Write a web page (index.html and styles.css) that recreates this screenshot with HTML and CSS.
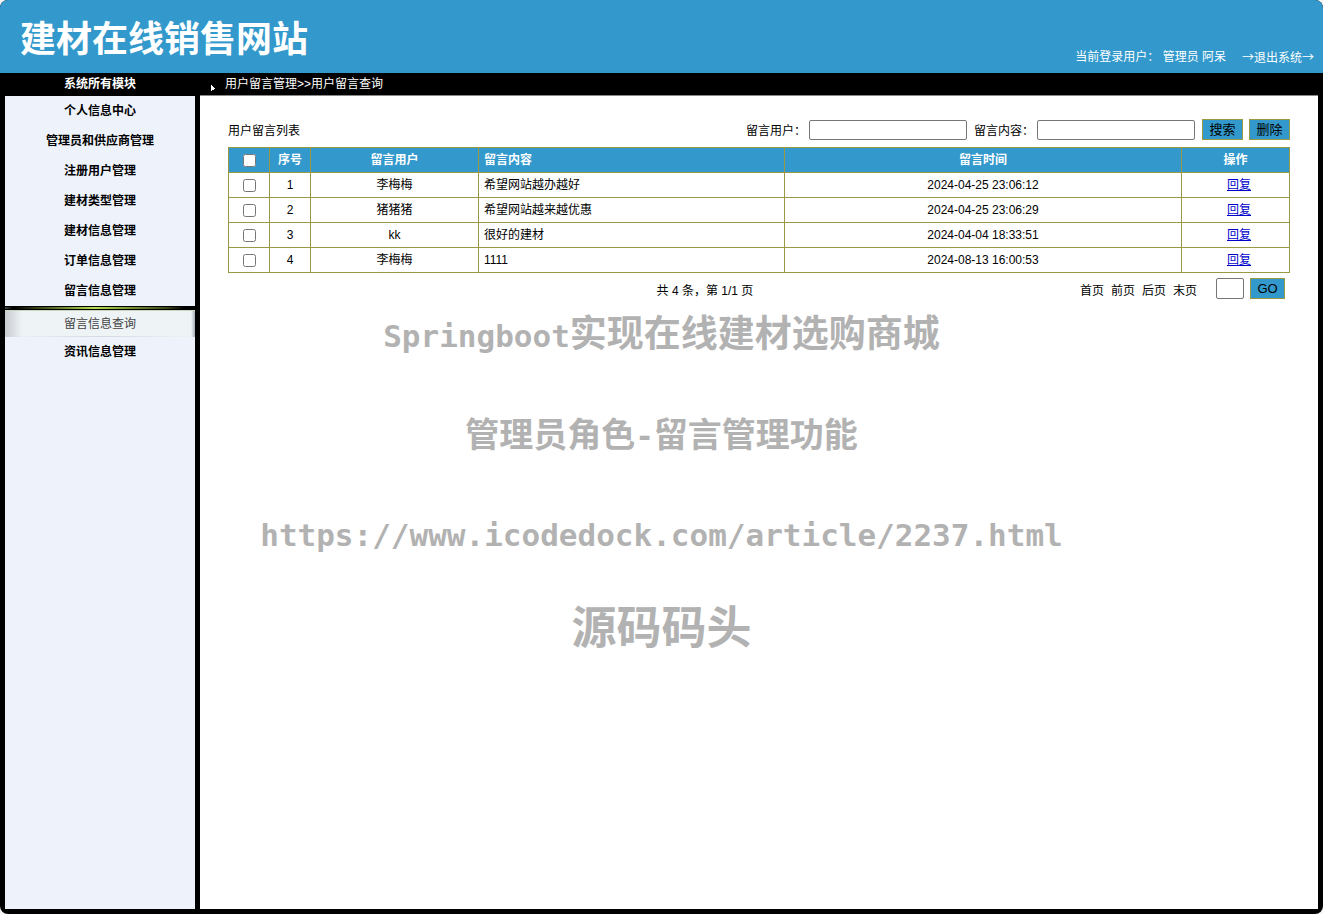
FILE: index.html
```html
<!DOCTYPE html>
<html lang="zh-CN">
<head>
<meta charset="utf-8">
<title>建材在线销售网站</title>
<link rel="stylesheet" href="styles.css">
</head>
<body>
<div class="app">
  <header class="header">
    <h1 class="site-title">建材在线销售网站</h1>
    <div class="user-bar">
      <span>当前登录用户： 管理员 阿呆</span>
      <a class="logout" href="#">→退出系统→</a>
    </div>
  </header>
  <div class="columns">
    <aside class="side">
      <h2 class="side-title">系统所有模块</h2>
      <nav class="menu">
        <a class="item" href="#">个人信息中心</a>
        <a class="item" href="#">管理员和供应商管理</a>
        <a class="item" href="#">注册用户管理</a>
        <a class="item" href="#">建材类型管理</a>
        <a class="item" href="#">建材信息管理</a>
        <a class="item" href="#">订单信息管理</a>
        <a class="item" href="#">留言信息管理</a>
        <a class="subitem" href="#">留言信息查询</a>
        <a class="item" href="#">资讯信息管理</a>
      </nav>
    </aside>
    <main class="main">
      <div class="crumbs">
        <svg class="crumb-arrow" viewBox="0 0 4 6" aria-hidden="true"><path d="M0 0h1v1h1v1h1v1h1v1H3v1H1v1H0z"/></svg>
        <span>用户留言管理&gt;&gt;用户留言查询</span>
      </div>
      <div class="content">
        <form class="toolbar">
          <span class="list-title">用户留言列表</span>
          <label class="field-label" for="user">留言用户：</label>
          <input class="box field" id="user" type="text">
          <label class="field-label" for="text">留言内容：</label>
          <input class="box field" id="text" type="text">
          <button class="btn" type="button">搜索</button>
          <button class="btn btn-last" type="button">删除</button>
        </form>
        <table class="list">
          <colgroup><col class="c-check"><col class="c-num"><col class="c-user"><col class="c-text"><col><col class="c-action"></colgroup>
          <thead>
            <tr><th><input class="check" type="checkbox" aria-label="全选"></th><th>序号</th><th>留言用户</th><th class="left">留言内容</th><th>留言时间</th><th>操作</th></tr>
          </thead>
          <tbody>
            <tr><td><input class="check" type="checkbox" aria-label="选择 1"></td><td>1</td><td>李梅梅</td><td class="left">希望网站越办越好</td><td>2024-04-25 23:06:12</td><td class="action"><a href="#">回复</a></td></tr>
            <tr><td><input class="check" type="checkbox" aria-label="选择 2"></td><td>2</td><td>猪猪猪</td><td class="left">希望网站越来越优惠</td><td>2024-04-25 23:06:29</td><td class="action"><a href="#">回复</a></td></tr>
            <tr><td><input class="check" type="checkbox" aria-label="选择 3"></td><td>3</td><td>kk</td><td class="left">很好的建材</td><td>2024-04-04 18:33:51</td><td class="action"><a href="#">回复</a></td></tr>
            <tr><td><input class="check" type="checkbox" aria-label="选择 4"></td><td>4</td><td>李梅梅</td><td class="left">1111</td><td>2024-08-13 16:00:53</td><td class="action"><a href="#">回复</a></td></tr>
          </tbody>
        </table>
        <form class="pager">
          <span class="summary">共 4 条，第 1/1 页</span>
          <span class="pages"><a href="#">首页</a><a href="#">前页</a><a href="#">后页</a><a href="#">末页</a></span>
          <input class="box page-no" type="text" aria-label="页码">
          <button class="btn go" type="button">GO</button>
        </form>
      </div>
    </main>
  </div>
  <div class="watermark">
    <p class="mark mark-a"><span class="mono">Springboot</span>实现在线建材选购商城</p>
    <p class="mark mark-b">管理员角色<span class="mono">-</span>留言管理功能</p>
    <p class="mark mark-c">https://www.icodedock.com/article/2237.html</p>
    <p class="mark mark-d">源码码头</p>
  </div>
</div>
</body>
</html>
```
FILE: styles.css
```css
* { box-sizing: border-box; }
body {
  margin: 0;
  background: #f4f4f4;
  color: #000;
  font: 12px/20px "Liberation Sans", "Noto Sans CJK SC", sans-serif;
}
a { color: inherit; text-decoration: none; }
h1, h2, p { margin: 0; }
.app {
  position: relative;
  display: flex;
  flex-direction: column;
  min-height: 100vh;
  background: #000;
  border-radius: 8px;
  overflow: hidden;
}
.header {
  display: flex;
  justify-content: space-between;
  align-items: flex-end;
  height: 73px;
  padding: 0 9px 6px 20px;
  background: #3399cc;
  color: #fff;
}
.site-title { font-size: 36px; line-height: 54px; }
.user-bar { display: flex; gap: 16px; }
.logout { font-family: "Noto Sans CJK SC", sans-serif; }
.columns { flex: 1; display: flex; gap: 5px; padding: 0 5px 5px; }
.side { width: 190px; display: flex; flex-direction: column; text-align: center; }
.side-title { height: 23px; font-size: 12px; line-height: 22px; color: #fff; }
.menu { flex: 1; background: #edf2fb; }
.item { display: block; height: 30px; line-height: 31px; font-weight: bold; }
.subitem {
  display: block;
  height: 31px;
  padding-top: 4px;
  line-height: 29px;
  color: #444;
  background:
    linear-gradient(#000, #000) 0 0 / 100% 1px no-repeat,
    linear-gradient(90deg, #444, #000 4%, #000 5%, #b4e050 47%, #3a4718 85%, #000 94%) 0 1px / 100% 2px no-repeat,
    linear-gradient(#000, #000) 0 3px / 100% 1px no-repeat,
    linear-gradient(#c8d8c0, #c8d8c0) 0 4px / 100% 1px no-repeat,
    linear-gradient(90deg, transparent, #d5dade 50%, transparent) bottom / 100% 1px no-repeat,
    linear-gradient(90deg, #c8cbcf, #eef3f6 9%, #eef3f6 98%, #a5adb5);
}
.main { flex: 1; min-width: 0; display: flex; flex-direction: column; }
.crumbs {
  display: flex;
  align-items: center;
  gap: 10px;
  height: 23px;
  padding: 0 11px 1px;
  border-bottom: 1px solid #888;
  color: #fff;
}
.crumb-arrow { width: 4px; height: 6px; margin-top: 8px; fill: #fff; }
.content { flex: 1; padding: 23px 28px; background: #fff; }
.toolbar { display: flex; align-items: center; margin-bottom: 7px; line-height: 17px; }
.list-title { flex: 1; padding-top: 4px; }
.field-label { margin-right: 3px; padding-top: 4px; }
.box {
  height: 20px;
  padding: 1px 2px;
  border: 1px solid #767676;
  border-radius: 2px;
  background: #fff;
  font: inherit;
}
.field { width: 158px; margin-right: 7px; }
.btn {
  width: 41px;
  height: 21px;
  padding: 0;
  border: 1px solid #999944;
  background: #3399cc;
  color: #000;
  font: 13px/19px "Liberation Sans", "Noto Sans CJK SC", sans-serif;
}
.btn-last { margin-left: 6px; }
.list { width: 100%; table-layout: fixed; border-collapse: collapse; }
.c-check, .c-num { width: 41px; }
.c-user { width: 168px; }
.c-text { width: 306px; }
.c-action { width: 108px; }
.list th, .list td { height: 25px; padding: 0; border: 1px solid #999944; text-align: center; }
.list th { background: #3399cc; color: #fff; }
.list .left { padding-left: 5px; text-align: left; }
.list .action { padding-left: 7px; }
.action a { color: #0000cc; text-decoration: underline; }
.check { display: block; width: 13px; height: 13px; margin: 1px auto 0; }
.pager { display: flex; align-items: flex-start; margin-top: 5px; padding-right: 5px; }
.summary { flex: 1; padding: 3px 0 0 102px; text-align: center; }
.pages { display: flex; gap: 7px; padding-top: 3px; margin-right: 19px; }
.page-no { width: 28px; height: 21px; margin-right: 6px; }
.go { width: 35px; }
.watermark {
  position: absolute;
  inset: 310px 0 auto;
  color: #b2b2b2;
  font-weight: bold;
  text-align: center;
  pointer-events: none;
}
.mark { height: 50px; margin-bottom: 50px; line-height: 50px; white-space: nowrap; }
.mark-a { font-size: 37px; }
.mark-b { font-size: 34px; }
.mark-c { font: bold 31px/50px "DejaVu Sans Mono", monospace; }
.mark-d { margin-top: -6px; font-size: 45px; }
.mono { font-family: "DejaVu Sans Mono", monospace; font-size: 31px; }
```
